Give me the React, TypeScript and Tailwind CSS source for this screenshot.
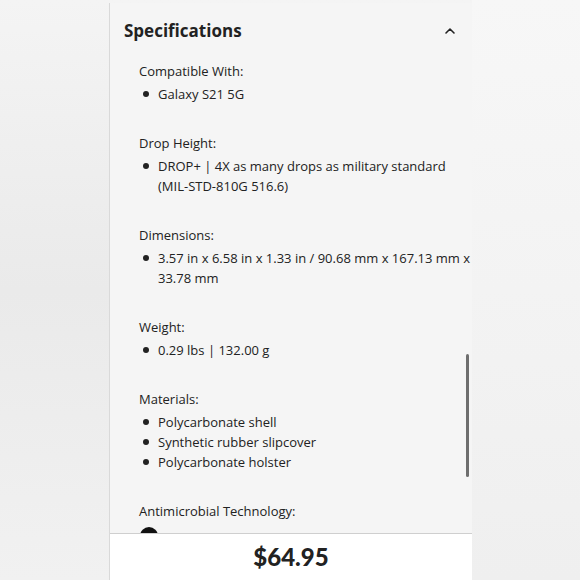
const sections: { label: string; items: string[] }[] = [
  { label: 'Compatible With:', items: ['Galaxy S21 5G'] },
  {
    label: 'Drop Height:',
    items: ['DROP+ | 4X as many drops as military standard (MIL-STD-810G 516.6)'],
  },
  {
    label: 'Dimensions:',
    items: ['3.57 in x 6.58 in x 1.33 in / 90.68 mm x 167.13 mm x 33.78 mm'],
  },
  { label: 'Weight:', items: ['0.29 lbs | 132.00 g'] },
  {
    label: 'Materials:',
    items: ['Polycarbonate shell', 'Synthetic rubber slipcover', 'Polycarbonate holster'],
  },
];

function ChevronUp() {
  return (
    <svg viewBox="0 0 12 12" className="h-3 w-3" fill="none" stroke="#222" strokeWidth="1.6">
      <path d="M2 8l4-4 4 4" strokeLinecap="round" strokeLinejoin="round" />
    </svg>
  );
}

export default function App() {
  return (
    <div className="flex h-[580px] w-[580px] overflow-hidden bg-gradient-to-b from-[#f4f4f4] via-[#eaeaea] to-[#f1f1f1] font-['Open_Sans',sans-serif] text-[#222]">
      <div className="relative ml-[109px] mt-[3px] flex w-[363px] flex-col border-l border-[#d9d9d9] bg-[#f5f5f5]">
        <div className="flex h-[55px] shrink-0 items-center justify-between pl-[14px] pr-[16px]">
          <h2 className="text-[17px] font-bold leading-6">Specifications</h2>
          <ChevronUp />
        </div>

        <div className="flex-1 overflow-hidden pl-[29px] pr-[1px] pt-[3px]">
          <div className="flex flex-col gap-[29px]">
            {sections.map((s) => (
              <div key={s.label}>
                <div className="text-[13px] leading-5">{s.label}</div>
                <ul className="mt-[3px]">
                  {s.items.map((it) => (
                    <li key={it} className="flex text-[13px] leading-5">
                      <span className="flex h-5 w-[19px] shrink-0 items-center pl-[4px]">
                        <span className="h-[6px] w-[6px] rounded-full bg-[#222]" />
                      </span>
                      <span>{it}</span>
                    </li>
                  ))}
                </ul>
              </div>
            ))}
            <div>
              <div className="text-[13px] leading-5">Antimicrobial Technology:</div>
              <div className="mt-[6px] flex">
                <span className="ml-[1px] h-[18px] w-[18px] rounded-full bg-[#111]" />
              </div>
            </div>
          </div>
        </div>

        <div className="flex h-[47px] shrink-0 items-center justify-center border-t border-[#cfcfcf] bg-white">
          <span className="font-['Lato',sans-serif] text-[24px] font-black text-[#222]">$64.95</span>
        </div>

        <div className="absolute left-[356px] top-[351px] h-[123px] w-[3px] rounded-full bg-[#6e6e6e]" />
      </div>
      <div className="flex-1 bg-gradient-to-b from-[#f7f7f7] via-[#f3f3f3] to-[#efefef]" />
    </div>
  );
}
